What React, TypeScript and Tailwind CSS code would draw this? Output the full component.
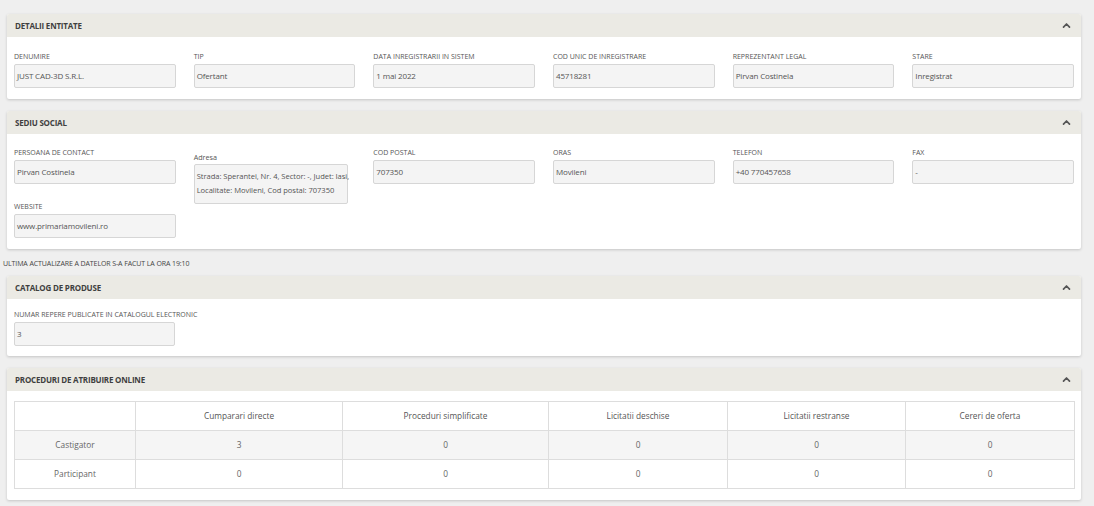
import React from "react";

const font = { fontFamily: '"Open Sans", "Noto Sans", sans-serif' };

function Chevron() {
  return (
    <svg width="9" height="7" viewBox="0 0 9 7" className="mr-[1px]">
      <path d="M1.5 5.2 L4.5 2 L7.5 5.2" fill="none" stroke="#555" strokeWidth="1.7" strokeLinecap="round" strokeLinejoin="round" />
    </svg>
  );
}

function Panel({ title, children }: { title: string; children: React.ReactNode }) {
  return (
    <div className="bg-white shadow-[0_1px_3px_rgba(0,0,0,0.18)] rounded-[2px]">
      <div className="h-[23px] bg-[#ebeae4] flex items-center justify-between pl-[8px] pr-[9px] rounded-t-[2px]">
        <span className="text-[8px] font-bold text-[#3f3f3f] tracking-[-0.2px]">{title}</span>
        <Chevron />
      </div>
      {children}
    </div>
  );
}

function Label({ children }: { children: React.ReactNode }) {
  return <div className="text-[7px] leading-[11px] text-[#555] uppercase whitespace-nowrap">{children}</div>;
}

function Input({ value, w }: { value: string; w?: string }) {
  return (
    <div
      className={`h-[24px] mt-[2px] border border-[#d6d6d6] bg-[#f4f4f4] rounded-[2px] pl-[2px] flex items-center text-[8px] tracking-[-0.15px] text-[#555] whitespace-nowrap overflow-hidden ${w ?? "w-full"}`}
    >
      {value}
    </div>
  );
}

function Field({ label, value, w }: { label: string; value: string; w?: string }) {
  return (
    <div>
      <Label>{label}</Label>
      <Input value={value} w={w} />
    </div>
  );
}

const entity: [string, string][] = [
  ["DENUMIRE", "JUST CAD-3D S.R.L."],
  ["TIP", "Ofertant"],
  ["DATA INREGISTRARII IN SISTEM", "1 mai 2022"],
  ["COD UNIC DE INREGISTRARE", "45718281"],
  ["REPREZENTANT LEGAL", "Pirvan Costinela"],
  ["STARE", "Inregistrat"],
];

const cols = ["Cumparari directe", "Proceduri simplificate", "Licitatii deschise", "Licitatii restranse", "Cereri de oferta"];
const widths = ["w-[121px]", "w-[207px]", "w-[206px]", "w-[179px]", "w-[178px]", "w-[169px]"];

export default function App() {
  return (
    <div style={font} className="min-h-[506px] bg-[#efefef] pl-[7px] pr-[13px] pt-[14px] pb-[6px]">
      <Panel title="DETALII ENTITATE">
        <div className="grid grid-cols-6 gap-x-[18px] px-[7px] pt-[14px] pb-[11px]">
          {entity.map(([l, v]) => (
            <Field key={l} label={l} value={v} />
          ))}
        </div>
      </Panel>

      <div className="h-[12px]" />

      <Panel title="SEDIU SOCIAL">
        <div className="grid grid-cols-6 gap-x-[18px] gap-y-[17px] px-[7px] pt-[13px] pb-[11px]">
          <Field label="PERSOANA DE CONTACT" value="Pirvan Costinela" />
          <div className="row-span-2 pt-[4px]">
            <div className="text-[7.2px] leading-[12px] text-[#555]">Adresa</div>
            <div className="mt-[1px] w-[154px] h-[40px] border border-[#d6d6d6] bg-[#f4f4f4] rounded-[2px] pl-[2px] pt-[4px] text-[7.6px] tracking-[-0.05px] leading-[14px] text-[#555] whitespace-nowrap">
              Strada: Sperantei, Nr. 4, Sector: -, Judet: Iasi,
              <br />
              Localitate: Movileni, Cod postal: 707350
            </div>
          </div>
          <Field label="COD POSTAL" value="707350" />
          <Field label="ORAS" value="Movileni" />
          <Field label="TELEFON" value="+40 770457658" />
          <Field label="FAX" value="-" />
          <Field label="WEBSITE" value="www.primariamovileni.ro" />
        </div>
      </Panel>

      <div className="-ml-[4px] mt-[10px] mb-[7px] text-[7px] leading-[10px] text-[#444] whitespace-nowrap tracking-[-0.1px]">
        ULTIMA ACTUALIZARE A DATELOR S-A FACUT LA ORA 19:10
      </div>

      <Panel title="CATALOG DE PRODUSE">
        <div className="px-[7px] pt-[10px] pb-[10px]">
          <div className="w-[161px]">
            <Label>NUMAR REPERE PUBLICATE IN CATALOGUL ELECTRONIC</Label>
            <Input value="3" />
          </div>
        </div>
      </Panel>

      <div className="h-[12px]" />

      <Panel title="PROCEDURI DE ATRIBUIRE ONLINE">
        <div className="px-[7px] pt-[10px] pb-[11px]">
          <table className="w-full border-collapse table-fixed text-[8.3px] text-[#666]">
            <colgroup>
              {widths.map((w) => (
                <col key={w} className={w} />
              ))}
            </colgroup>
            <thead>
              <tr className="h-[29px]">
                <th className="border border-[#dddddd] font-normal"></th>
                {cols.map((c) => (
                  <th key={c} className="border border-[#dddddd] font-normal text-center text-[#555]">
                    {c}
                  </th>
                ))}
              </tr>
            </thead>
            <tbody>
              <tr className="h-[29px] bg-[#f5f5f5]">
                <td className="border border-[#dddddd] text-center">Castigator</td>
                {["3", "0", "0", "0", "0"].map((v, i) => (
                  <td key={i} className="border border-[#dddddd] text-center">
                    {v}
                  </td>
                ))}
              </tr>
              <tr className="h-[29px]">
                <td className="border border-[#dddddd] text-center">Participant</td>
                {["0", "0", "0", "0", "0"].map((v, i) => (
                  <td key={i} className="border border-[#dddddd] text-center">
                    {v}
                  </td>
                ))}
              </tr>
            </tbody>
          </table>
        </div>
      </Panel>
    </div>
  );
}
